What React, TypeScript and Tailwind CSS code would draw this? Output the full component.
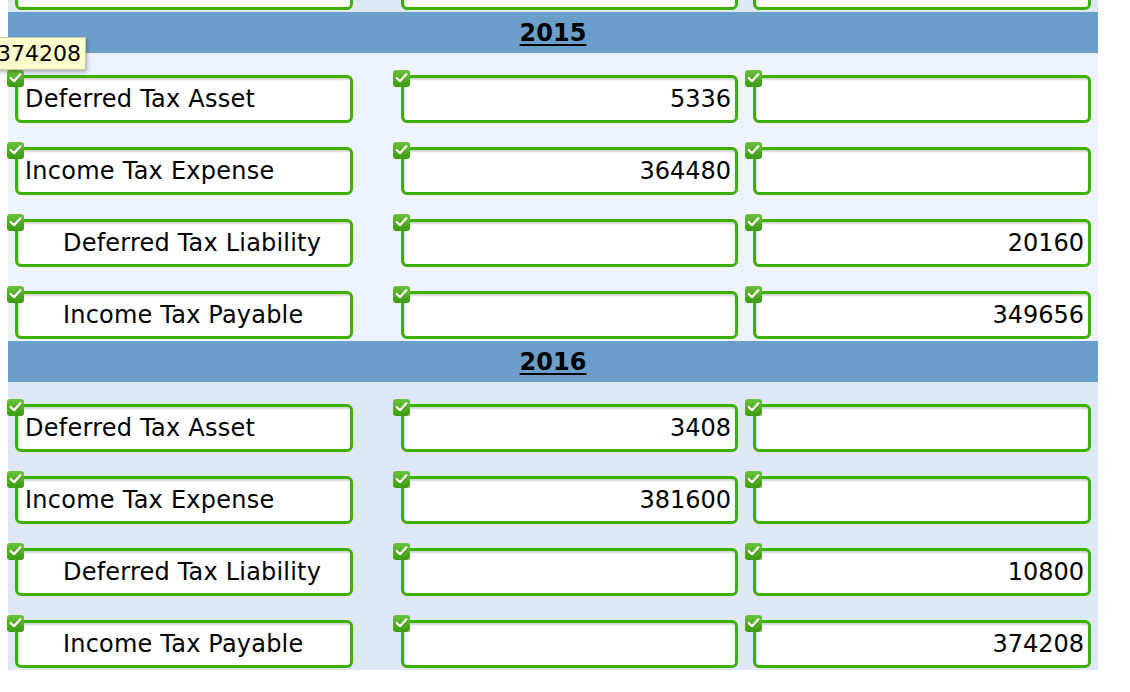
import React from "react"

type Row = { label: string; indent?: boolean; debit?: string; credit?: string }

const section2015: Row[] = [
  { label: "Deferred Tax Asset", debit: "5336" },
  { label: "Income Tax Expense", debit: "364480" },
  { label: "Deferred Tax Liability", indent: true, credit: "20160" },
  { label: "Income Tax Payable", indent: true, credit: "349656" },
]

const section2016: Row[] = [
  { label: "Deferred Tax Asset", debit: "3408" },
  { label: "Income Tax Expense", debit: "381600" },
  { label: "Deferred Tax Liability", indent: true, credit: "10800" },
  { label: "Income Tax Payable", indent: true, credit: "374208" },
]

function CheckMark() {
  return (
    <svg width="17" height="17" viewBox="0 0 16 16" className="absolute -left-[8px] -top-[5px]">
      <defs>
        <linearGradient id="chk" x1="0" y1="0" x2="0" y2="1">
          <stop offset="0" stopColor="#6cc33a" />
          <stop offset="1" stopColor="#3a9a10" />
        </linearGradient>
      </defs>
      <rect x="0" y="0" width="16" height="16" rx="3" fill="url(#chk)" />
      <path d="M3.5 8.2 L6.6 11.2 L12.6 4.6" fill="none" stroke="#2d7a0a" strokeWidth="2.6" strokeLinecap="round" strokeLinejoin="round" opacity="0.5" />
      <path d="M3.5 7.6 L6.6 10.6 L12.6 4" fill="none" stroke="#ffffff" strokeWidth="2.2" strokeLinecap="round" strokeLinejoin="round" />
    </svg>
  )
}

function Field({ text, align = "left", indent = false, check = true, className = "" }: { text?: string; align?: "left" | "right"; indent?: boolean; check?: boolean; className?: string }) {
  return (
    <div className={`relative shrink-0 ${className}`}>
      <div
        className={`h-[48px] rounded-[6px] border-[3px] border-[#3db000] bg-white shadow-[inset_1px_2px_2px_rgba(0,0,0,0.18)] flex items-center text-[24px] text-black leading-none whitespace-nowrap ${
          align === "right" ? "justify-end pr-[4px]" : indent ? "pl-[45px] tracking-[0.2px]" : "pl-[7px] tracking-[0.25px]"
        }`}
      >
        {text}
      </div>
      {check && <CheckMark />}
    </div>
  )
}

function Cells({ label, debit, credit, indent, check = true }: { label?: string; debit?: string; credit?: string; indent?: boolean; check?: boolean }) {
  return (
    <div className="flex pl-[7px] pt-[22px] pb-[2px]">
      <Field className="w-[338px]" text={label} indent={indent} check={check} />
      <Field className="w-[337px] ml-[48px]" text={debit} align="right" check={check} />
      <Field className="w-[338px] ml-[15px]" text={credit} align="right" check={check} />
    </div>
  )
}

function YearHeader({ year }: { year: string }) {
  return (
    <div className="h-[41px] bg-[#6a9fcb] flex items-center justify-center">
      <span className="text-[24px] font-bold underline underline-offset-[3px] decoration-2 text-black leading-none">{year}</span>
    </div>
  )
}

export default function App() {
  return (
    <div className="w-[1130px] h-[692px] bg-white overflow-hidden relative" style={{ fontFamily: "'DejaVu Sans', Verdana, sans-serif" }}>
      <div className="ml-[8px] w-[1090px]">
        {/* tail of the previous section */}
        <div className="h-[12px] bg-[#dfe8f6] overflow-hidden">
          <div className="-mt-[60px]">
            <Cells check={false} />
          </div>
        </div>

        <YearHeader year="2015" />
        <div className="bg-[#edf4fd]">
          {section2015.map((r) => (
            <Cells key={r.label} label={r.label} debit={r.debit} credit={r.credit} indent={r.indent} />
          ))}
        </div>

        <YearHeader year="2016" />
        <div className="bg-[#dfe8f6]">
          {section2016.map((r) => (
            <Cells key={r.label} label={r.label} debit={r.debit} credit={r.credit} indent={r.indent} />
          ))}
        </div>
      </div>

      {/* tooltip */}
      <div className="absolute left-[-8px] top-[37px] h-[33px] pl-[4px] pr-[4px] bg-[#fdfdcb] border border-[#c8c8a8] shadow-[1px_2px_4px_rgba(0,0,0,0.3)] flex items-center text-[22px] text-black leading-none">
        374208
      </div>
    </div>
  )
}
